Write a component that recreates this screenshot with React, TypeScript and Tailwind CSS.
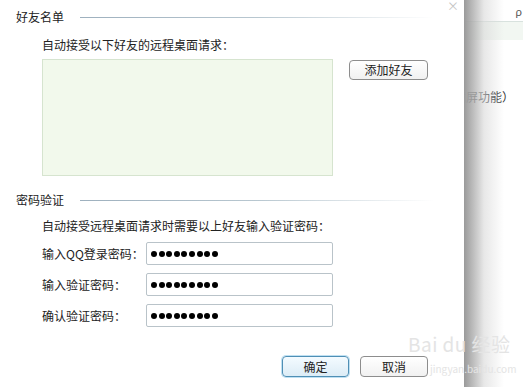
import React from "react";

const font = {fontFamily: '"Noto Sans CJK SC", "Noto Sans", sans-serif'};

const Dots = () => (
  <div className="flex items-center gap-[1.6px]">
    {Array.from({length: 9}).map((_, i) => (
      <span key={i} className="w-[6px] h-[6px] rounded-full bg-black" />
    ))}
  </div>
);

const SectionTitle = ({title}: {title: string}) => (
  <div className="flex items-center h-4">
    <span className="text-[12px] leading-4 text-[#222]">{title}</span>
    <div className="ml-[16px] mr-[30px] flex-1 h-px bg-gradient-to-r from-[#9eb0be] via-[#b8c7d0] to-transparent" />
  </div>
);

const PwdRow = ({label}: {label: string}) => (
  <div className="flex items-center h-[23px]">
    <span className="w-[104px] text-[12px] text-[#222]">{label}</span>
    <div className="w-[187px] h-[23px] border border-[#b9c3c9] rounded-[2px] bg-white flex items-center pl-[4px]">
      <Dots />
    </div>
  </div>
);

export default function App() {
  return (
    <div className="relative w-[523px] h-[387px] flex overflow-hidden bg-white" style={font}>
      <div className="relative w-[464px] h-full bg-white pl-[16px] pt-[9px]">
        <span className="absolute right-[5px] top-0 text-[12px] leading-3 text-[#c4c4c4]">×</span>

        <SectionTitle title="好友名单" />
        <div className="mt-[12px] pl-[26px] text-[12px] leading-4 text-[#222]">
          自动接受以下好友的远程桌面请求：
        </div>
        <div className="mt-[6px] pl-[26px] flex items-start">
          <div className="w-[291px] h-[117px] bg-[#f2f9ec] border border-[#d6e4cf]" />
          <button className="ml-[16px] mt-[1px] w-[79px] h-[20px] rounded-[4px] border border-[#8d8d8d] bg-gradient-to-b from-white to-[#f1f1f1] text-[12px] leading-4 text-[#222]">
            添加好友
          </button>
        </div>

        <div className="mt-[16px]">
          <SectionTitle title="密码验证" />
        </div>
        <div className="mt-[10px] pl-[26px] text-[12px] leading-4 text-[#222]">
          自动接受远程桌面请求时需要以上好友输入验证密码：
        </div>
        <div className="mt-[8px] pl-[26px] flex flex-col gap-[8px]">
          <PwdRow label="输入QQ登录密码：" />
          <PwdRow label="输入验证密码：" />
          <PwdRow label="确认验证密码：" />
        </div>

        <div className="mt-[29px] flex justify-end pr-[36px] gap-[11px]">
          <button className="w-[67px] h-[21px] rounded-[4px] border border-[#4f8fb5] bg-gradient-to-b from-[#f4fbff] to-[#dcecf6] shadow-[0_0_0_1px_#bfe0f2] text-[12px] leading-4 text-[#222]">
            确定
          </button>
          <button className="w-[68px] h-[21px] rounded-[4px] border border-[#8d8d8d] bg-gradient-to-b from-white to-[#f1f1f1] text-[12px] leading-4 text-[#222]">
            取消
          </button>
        </div>
      </div>

      <div className="relative flex-1 h-full bg-white overflow-hidden">
        <div className="h-[22px] border-b border-[#d8e2de] flex items-center justify-end pr-[1px]">
          <span className="text-[11px] leading-3 text-[#555]">ρ</span>
        </div>
        <div className="h-[18px] bg-[#f2f7f2]" />
        <div className="mt-[49px] -ml-[10px] whitespace-nowrap text-[12px] leading-4 text-[#333]">
          截屏功能）
        </div>
        <div className="absolute inset-y-0 left-0 w-[40px] bg-gradient-to-r from-[#9a9a9a] via-[#d8d8d8]/60 to-transparent" />
      </div>

      <div className="absolute left-[408px] top-[333px] flex flex-col items-start whitespace-nowrap text-[#e4e4e4] pointer-events-none">
        <span className="text-[19px] leading-[22px] tracking-wide">Bai du 经验</span>
        <span className="mt-[8px] text-[10px] leading-3 ml-[22px]">jingyan.baidu.com</span>
      </div>
    </div>
  );
}
